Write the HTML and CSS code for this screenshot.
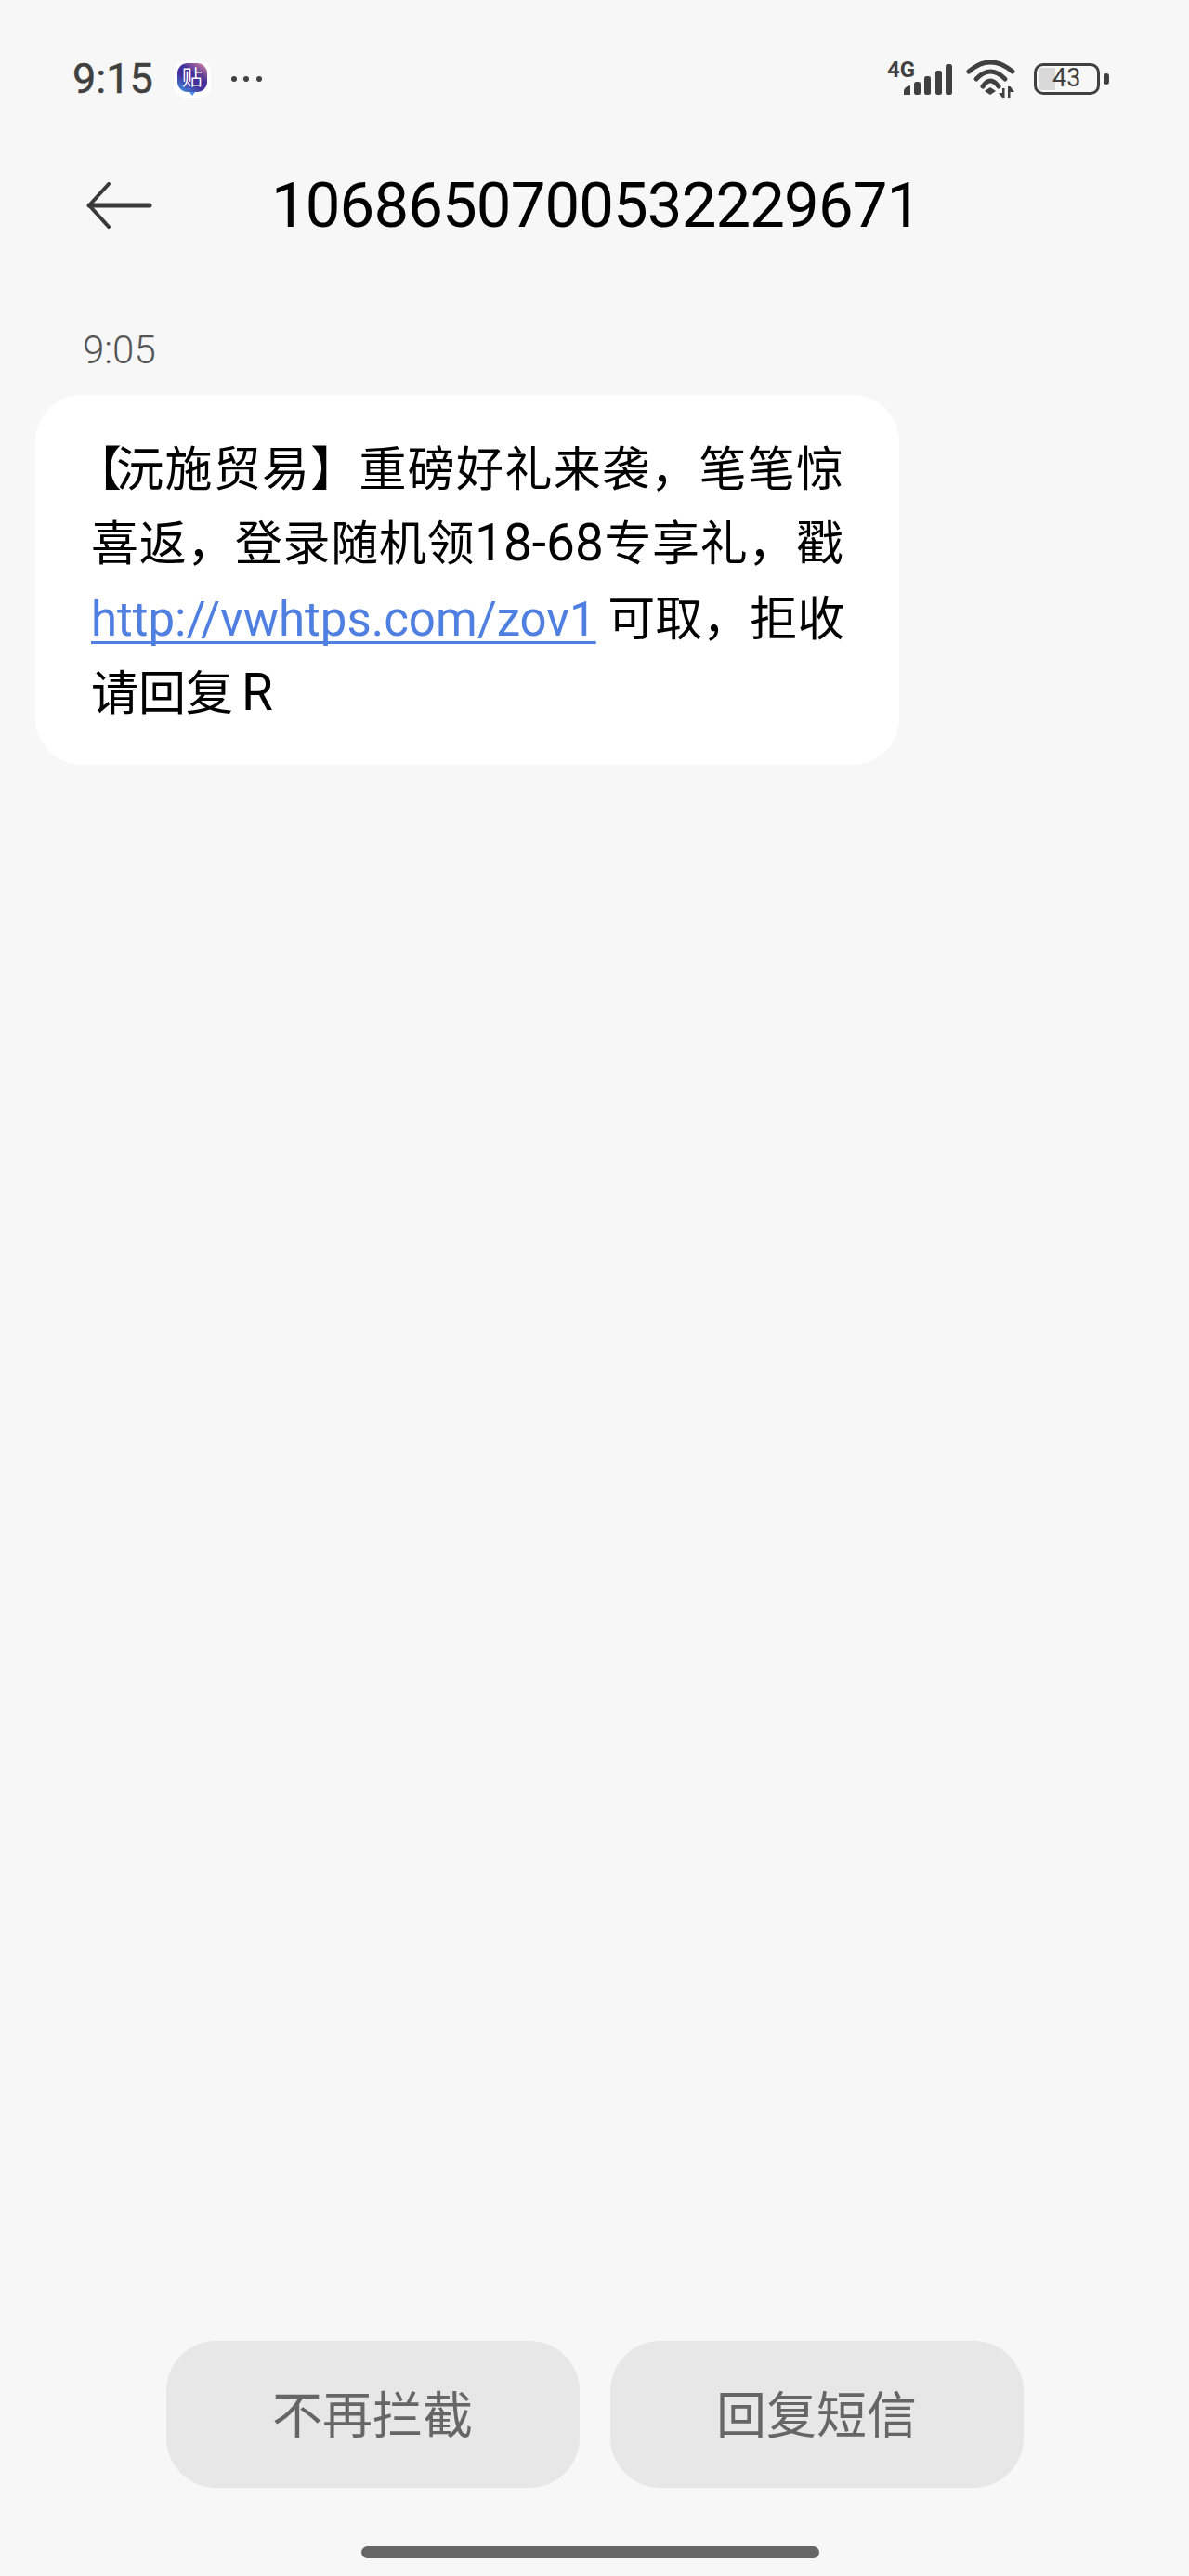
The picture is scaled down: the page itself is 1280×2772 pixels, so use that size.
FILE: index.html
```html
<!DOCTYPE html>
<html lang="zh-CN">
  <head>
    <title>短信</title>
    <meta charset="utf-8" />
    <link rel="stylesheet" href="styles.css">
  </head>
  <body>
    <div class="phone">
      <div class="status-bar">
        <div class="status-left">
          <span class="clock">9:15</span>
          <div class="app-icon">
            <div class="app-icon-rim">
              <span class="app-icon-char">贴</span>
            </div>
          </div>
          <span class="dots"><i></i><i></i><i></i></span>
        </div>
        <div class="status-right">
          <div class="net">
            <span class="net-label">4G</span>
            <svg class="net-bars" width="52" height="33" viewBox="0 0 52 33">
              <g fill="#404040">
                <path d="M0 33v-4q0-3 4-5l3-1v10z" />
                <rect x="11" y="19" width="7" height="14" rx="2.5" />
                <rect x="22" y="13" width="7" height="20" rx="2.5" />
                <rect x="34" y="7" width="7" height="26" rx="2.5" />
                <rect x="45" y="0" width="7" height="33" rx="2.5" />
              </g>
            </svg>
          </div>
          <svg class="wifi" width="54" height="40" viewBox="0 0 54 40">
            <g fill="none" stroke="#404040" stroke-width="5" stroke-linecap="round">
              <path d="M3 12Q26 -8 50 12" />
              <path d="M11 20Q26 4 42 20" />
              <path d="M18 28Q26 16 35 28" />
            </g>
            <path d="M20 33l6-4 6 4-6 4z" fill="#404040" />
            <path d="M39 40V30h2.500v10zM39 40l-4-5h4zM45 28v12h2.500V28zM47.500 28l4.500 6h-4.500z" fill="#404040" />
          </svg>
          <div class="battery">
            <div class="battery-case">
              <span class="battery-fill"></span>
              <span class="battery-num">43</span>
            </div>
            <span class="battery-tip"></span>
          </div>
        </div>
      </div>

      <div class="title-bar">
        <svg class="back" width="72" height="50" viewBox="0 0 72 50">
          <path d="M69 25H4" fill="none" stroke="#3a3a3a" stroke-width="5" stroke-linecap="round" />
          <path d="M25 2L4 25l21 23" fill="none" stroke="#3a3a3a" stroke-width="4" stroke-linecap="round" stroke-linejoin="round" />
        </svg>
        <h1 class="phone-number">1068650700532229671</h1>
      </div>

      <div class="messages">
        <div class="msg-time">9:05</div>
        <div class="bubble">
          <div class="line"><span class="bracket">【</span>沅施贸易】重磅好礼来袭，笔笔惊</div>
          <div class="line">喜返，登录随机领<span class="latin">18-68</span>专享礼，戳</div>
          <div class="line"><a href="#">http://vwhtps.com/zov1</a> 可取，拒收</div>
          <div class="line line-last">请回复<span class="latin latin-gap">R</span></div>
        </div>
      </div>

      <div class="actions">
        <button class="action">不再拦截</button>
        <button class="action">回复短信</button>
      </div>
      <div class="home-bar"></div>
    </div>
  </body>
</html>
```

FILE: styles.css
```css
* {
  box-sizing: border-box;
}

html,
body {
  margin: 0;
  background-color: #f7f7f7;
}

.phone {
  width: 1280px;
  height: 2772px;
  display: flex;
  flex-direction: column;
  font-family: 'Roboto', 'Noto Sans CJK SC', sans-serif;
  color: #000;
}

/* status bar */
.status-bar {
  height: 163px;
  padding: 63px 86px 0 78px;
  display: flex;
  justify-content: space-between;
  align-items: flex-start;
}

.status-left,
.status-right {
  height: 44px;
  display: flex;
  align-items: center;
}

.clock {
  font-size: 45px;
  line-height: 44px;
  font-weight: 400;
  color: #404040;
  -webkit-text-stroke: 0.5px #404040;
}

.app-icon {
  position: relative;
  width: 40px;
  height: 40px;
  margin-left: 22px;
  padding: 3px 4px 6px;
  background-color: #fff;
  border-radius: 13px;
}

/* little speech tail under the app icon */
.app-icon::after {
  content: '';
  position: absolute;
  left: 17px;
  bottom: 2px;
  border-left: 3px solid transparent;
  border-right: 3px solid transparent;
  border-top: 4px solid #4f8fe8;
}

.app-icon-rim {
  height: 100%;
  display: flex;
  align-items: center;
  justify-content: center;
  border-radius: 11px;
  background: linear-gradient(35deg, #3f9ae8 0%, #43309c 40%, #43309c 60%, #e58aa0 100%);
}

.app-icon-char {
  font-size: 22px;
  line-height: 24px;
  color: #fff;
}

.dots {
  margin-left: 22px;
  display: flex;
  gap: 7.5px;
}

.dots i {
  width: 6px;
  height: 6px;
  border-radius: 50%;
  background-color: #404040;
}

.net {
  position: relative;
  width: 70px;
  height: 37px;
  margin-bottom: 3px;
  display: flex;
  justify-content: flex-end;
  align-items: flex-end;
}

.net-label {
  position: absolute;
  left: 0;
  top: -2px;
  font-size: 24px;
  line-height: 24px;
  font-weight: 700;
  color: #404040;
}

.wifi {
  margin-left: 15px;
}

.battery {
  margin-left: 19px;
  display: flex;
  align-items: center;
}

.battery-case {
  width: 71px;
  height: 34px;
  border: 3.5px solid #404040;
  border-radius: 10px;
  padding: 2px 3px;
  display: flex;
  align-items: stretch;
  overflow: hidden;
}

.battery-fill {
  width: 17px;
  background-color: #d9d9d9;
}

.battery-num {
  margin-left: -3px;
  font-size: 27px;
  line-height: 23px;
  color: #404040;
}

.battery-tip {
  width: 6px;
  height: 12px;
  margin-left: 4px;
  border-radius: 3px;
  background-color: #404040;
}

/* title */
.title-bar {
  height: 116px;
  padding-left: 92px;
  display: flex;
  align-items: center;
}

.back {
  flex: none;
}

.phone-number {
  margin: 0 0 0 128px;
  font-size: 67px;
  line-height: 80px;
  font-weight: 400;
  letter-spacing: -0.85px;
  color: #000;
}

/* messages */
.messages {
  flex: 1;
  padding: 74px 0 0 38px;
}

.msg-time {
  margin-left: 51px;
  font-size: 42px;
  line-height: 48px;
  font-weight: 300;
  color: #555;
}

.bubble {
  width: 930px;
  height: 398px;
  margin-top: 24px;
  padding: 41px 60px 0;
  background-color: #fff;
  border-radius: 50px;
}

.line {
  font-size: 51px;
  line-height: 80.4px;
  white-space: nowrap;
  text-align: justify;
  text-align-last: justify;
}

.line-last {
  text-align-last: left;
}

.bracket {
  margin-left: -18px;
  letter-spacing: -7px;
}

.latin {
  font-size: 55px;
  line-height: 1;
}

.latin-gap {
  margin-left: 9px;
}

.line a {
  color: #4f7fe0;
  text-decoration: underline;
  text-decoration-thickness: 3px;
  text-decoration-skip-ink: none;
  text-underline-offset: 6px;
}

/* bottom buttons */
.actions {
  display: flex;
  justify-content: center;
  gap: 33px;
  margin-bottom: 63px;
}

.action {
  width: 445px;
  height: 158px;
  padding: 0 0 5px;
  border: 0;
  border-radius: 54px;
  background-color: #e7e7e7;
  font-family: inherit;
  font-size: 54px;
  color: #666;
}

.home-bar {
  width: 493px;
  height: 13px;
  margin: 0 0 19px 389px;
  border-radius: 7px;
  background-color: #666;
}
```
